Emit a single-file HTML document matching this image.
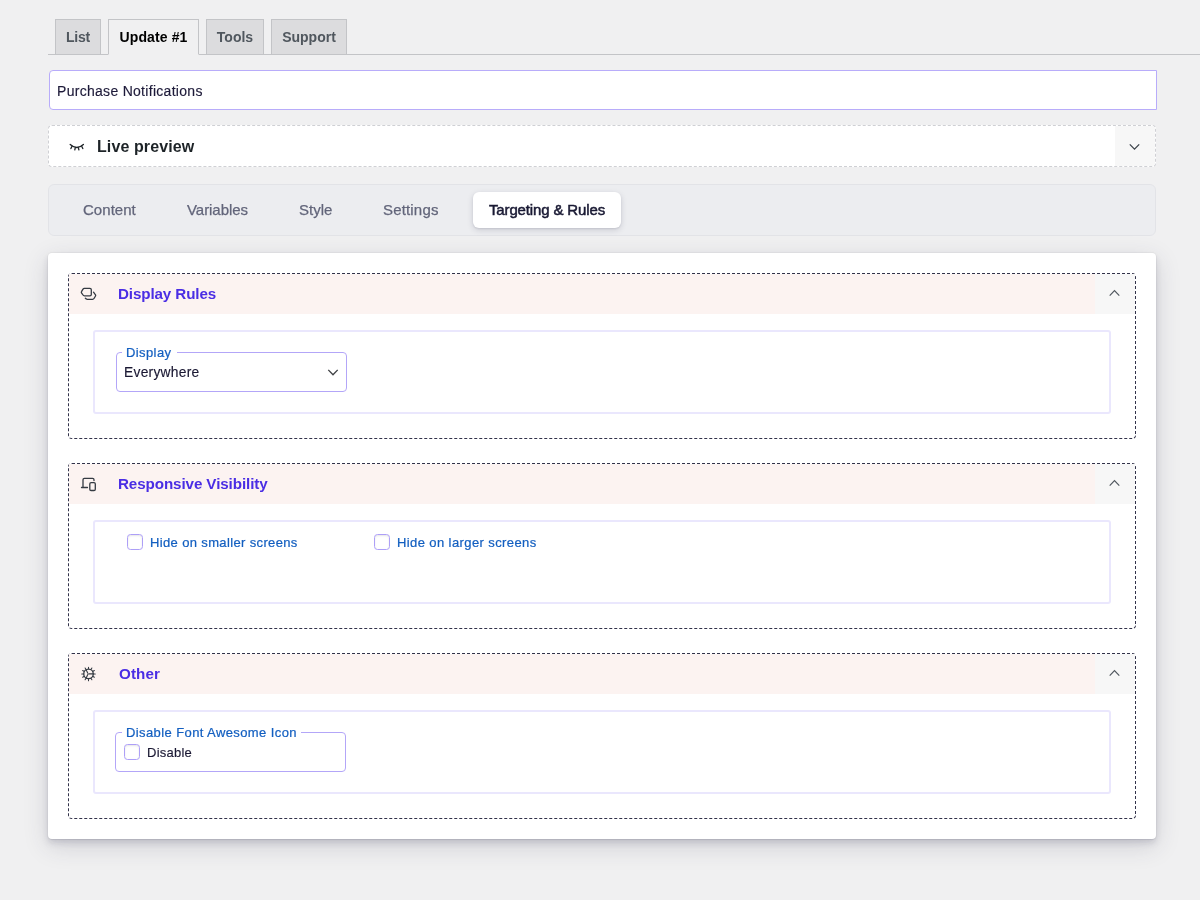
<!DOCTYPE html>
<html><head><meta charset="utf-8">
<style>
*{box-sizing:border-box;margin:0;padding:0}
html,body{width:1200px;height:900px;overflow:hidden;background:#f0f0f1;font-family:"Liberation Sans",sans-serif;color:#1d2327}
.t,.ntab{will-change:transform}
.t{position:absolute;white-space:pre;line-height:20px}
svg{position:absolute;overflow:visible}
.navwrap{position:absolute;left:48px;top:0;width:1152px;height:55px;border-bottom:1px solid #c3c4c7}
.ntab{position:absolute;top:19px;height:36px;border:1px solid #c3c4c7;background:#dcdcde;color:#50575e;font-weight:700;font-size:14px;line-height:34px;text-align:center;white-space:nowrap}
.ntab.act{background:#f0f0f1;color:#000;border-bottom-color:#f0f0f1}
.title{position:absolute;left:49px;top:70px;width:1108px;height:40px;background:#fff;border:1px solid #b8acfa;border-radius:4px 0 0 4px}
.live{position:absolute;left:48px;top:125px;width:1108px;height:42px;background:#fff;border:1px dashed #cfd0d4;border-radius:4px;overflow:hidden}
.live .r{position:absolute;right:0;top:0;width:40px;height:40px;background:#f7f7f7}
.tabs{position:absolute;left:48px;top:184px;width:1108px;height:52px;background:#ecedf0;border:1px solid #e2e3e7;border-radius:6px}
.tabact{position:absolute;left:473px;top:192px;width:148px;height:36px;background:#fff;border-radius:6px;box-shadow:0 2px 6px rgba(30,30,60,.15),0 1px 2px rgba(30,30,60,.1)}
.tt{font-size:15px;color:#62657a;-webkit-text-stroke:.25px #62657a}
.card{position:absolute;left:48px;top:253px;width:1108px;height:586px;background:#fff;border-radius:4px;box-shadow:0 0 0 1px rgba(45,45,75,.04),0 1px 1px rgba(45,45,75,.07),0 4px 6px rgba(45,45,75,.15),0 7px 24px rgba(45,45,75,.17)}
.sec{position:absolute;left:68px;width:1068px;height:166px;border:1px dashed #32324a;border-radius:4px}
.sec .hd{position:absolute;left:0;top:0;right:0;height:40px;background:#fcf3f1}
.sec .hd .r{position:absolute;right:0;top:0;width:40px;height:40px;background:#f7f7f7}
.sec .box{position:absolute;left:24px;top:56px;width:1018px;height:84px;border:2px solid #eae7fd;border-radius:3px}
.st{font-size:15.2px;font-weight:700;color:#4a2de4}
.fs{position:absolute;border:1px solid #b3a6f8;border-radius:4px}
.lg{position:absolute;background:#fff;height:4px}
.lt{font-size:13px;color:#135fc0;-webkit-text-stroke:.22px #135fc0}
.cb{position:absolute;width:16px;height:16px;border:1px solid #ad9ff7;border-radius:3.5px;background:#fff;box-shadow:inset 0 1px 2px rgba(0,0,0,.1)}
</style></head><body>
<div class="navwrap"></div>
<div class="ntab" style="left:55px;width:46px;letter-spacing:-.2px">List</div>
<div class="ntab act" style="left:108px;width:91px;letter-spacing:.12px">Update #1</div>
<div class="ntab" style="left:206px;width:58px">Tools</div>
<div class="ntab" style="left:271px;width:76px">Support</div>

<div class="title"></div>
<span class="t" id="t_title" style="left:57.200px;top:81px;font-size:14px;letter-spacing:.29px;color:#1d1a39;-webkit-text-stroke:.15px #1d1a39">Purchase Notifications</span>

<div class="live"><div class="r"></div></div>
<svg id="i_eye" style="left:0;top:.5px" width="1200" height="900" fill="none" stroke="#1d2327" stroke-width="1.3" stroke-linecap="round" stroke-linejoin="round"><path d="M70.200 143.500Q76.800 149.500 83.400 143.500"/><path d="M71.900 145.400L70.900 147.600"/><path d="M75.300 146.600L74.800 148.900"/><path d="M78.300 146.600L78.900 148.900"/><path d="M81.800 145.400L82.800 147.600"/></svg>
<span class="t" id="t_live" style="left:97.400px;top:137px;font-size:16px;font-weight:700;letter-spacing:.1px;color:#1d2327">Live preview</span>
<svg style="left:1128px;top:141px" width="14" height="12" fill="none" stroke="#3c434a" stroke-width="1.3"><path d="M1.800 3.400L6.500 8.100L11.200 3.400"/></svg>

<div class="tabs"></div>
<div class="tabact"></div>
<span class="t tt" id="t_c" style="left:83px;top:200px;letter-spacing:.04px">Content</span>
<span class="t tt" id="t_v" style="left:187.200px;top:200px;letter-spacing:-.05px">Variables</span>
<span class="t tt" id="t_s" style="left:298.800px;top:200px">Style</span>
<span class="t tt" id="t_se" style="left:382.500px;top:200px;letter-spacing:.17px">Settings</span>
<span class="t tt" id="t_tr" style="left:488.700px;top:200px;letter-spacing:-.14px;color:#191933;-webkit-text-stroke:.5px #191933">Targeting &amp; Rules</span>

<div class="card"></div>

<!-- Section 1 -->
<div class="sec" style="top:273px"><div class="hd"><div class="r"></div></div><div class="box"></div></div>
<svg id="i_disp" style="left:0;top:0" width="1200" height="900" fill="none" stroke="#343a42" stroke-width="1.3" stroke-linecap="round" stroke-linejoin="round">
<path d="M84.300 288.300H89.900Q91.300 288.300 91.300 289.700V294.400Q91.300 295.800 89.900 295.800H84.400Q83.500 295.800 83 295L81.500 292.800Q81.100 292.200 81.500 291.600L83 289.100Q83.500 288.300 84.300 288.300Z"/>
<path d="M93.500 292.200L95.500 294.800Q95.900 295.400 95.500 296L94 298.500Q93.500 299.300 92.600 299.300H87.300Q86 299.300 85.300 298.200"/>
</svg>
<span class="t st" id="t_dr" style="left:118.200px;top:284px;letter-spacing:-.12px">Display Rules</span>
<svg style="left:1108px;top:287px" width="14" height="12" fill="none" stroke="#50575e" stroke-width="1.2"><path d="M1.700 8.600L6.500 3.700L11.300 8.600"/></svg>
<div class="fs" style="left:116px;top:352px;width:231px;height:40px"></div>
<div class="lg" style="left:122px;top:351px;width:55px"></div>
<span class="t lt" id="t_dl" style="left:126.400px;top:343px;letter-spacing:.4px">Display</span>
<span class="t" id="t_ev" style="left:124.400px;top:363px;font-size:13.8px;letter-spacing:.27px;color:#1a1833;-webkit-text-stroke:.15px #1a1833">Everywhere</span>
<svg style="left:326px;top:366px" width="14" height="12" fill="none" stroke="#3f4144" stroke-width="1.35"><path d="M2.300 3.900L7 8.800L11.700 3.900"/></svg>

<!-- Section 2 -->
<div class="sec" style="top:463px"><div class="hd"><div class="r"></div></div><div class="box"></div></div>
<svg id="i_dev" style="left:0;top:0" width="1200" height="900" fill="none" stroke="#343a42" stroke-width="1.3" stroke-linecap="round" stroke-linejoin="round">
<path d="M94 480.500V479.700Q94 478.300 92.600 478.300H84.400Q83 478.300 83 479.700V487.500M81.500 487.500H87.500"/>
<rect x="89.800" y="482.700" width="5.500" height="7.800" rx="1.300"/>
</svg>
<span class="t st" id="t_rv" style="left:118.200px;top:474px;letter-spacing:-.1px">Responsive Visibility</span>
<svg style="left:1108px;top:477px" width="14" height="12" fill="none" stroke="#50575e" stroke-width="1.2"><path d="M1.700 8.600L6.500 3.700L11.300 8.600"/></svg>
<div class="cb" style="left:127px;top:534px"></div>
<span class="t lt" id="t_h1" style="left:150px;top:533px;letter-spacing:.36px">Hide on smaller screens</span>
<div class="cb" style="left:374px;top:534px"></div>
<span class="t lt" id="t_h2" style="left:397px;top:533px;letter-spacing:.4px">Hide on larger screens</span>

<!-- Section 3 -->
<div class="sec" style="top:653px"><div class="hd"><div class="r"></div></div><div class="box"></div></div>
<svg id="i_cog" style="left:0;top:-.2px" width="1200" height="900" fill="none" stroke="#343a42" stroke-linecap="round" stroke-linejoin="round"><circle cx="88.5" cy="673.9" r="4.75" stroke-width="1.35"/><path d="M88.50 668.60L88.50 667.15M91.15 669.31L91.88 668.05M93.09 671.25L94.35 670.52M93.80 673.90L95.25 673.90M93.09 676.55L94.35 677.27M91.15 678.49L91.88 679.75M88.50 679.20L88.50 680.65M85.85 678.49L85.12 679.75M83.91 676.55L82.65 677.27M83.20 673.90L81.75 673.90M83.91 671.25L82.65 670.52M85.85 669.31L85.12 668.05" stroke-width="1.05"/><path d="M88.90 673.90H93.20M87.80 673.20L86.15 669.83M87.80 674.60L86.15 677.97" stroke-width="1.1"/></svg>
<span class="t st" id="t_ot" style="left:119px;top:664px;letter-spacing:.12px">Other</span>
<svg style="left:1108px;top:667px" width="14" height="12" fill="none" stroke="#50575e" stroke-width="1.2"><path d="M1.700 8.600L6.500 3.700L11.300 8.600"/></svg>
<div class="fs" style="left:115px;top:732px;width:231px;height:40px"></div>
<div class="lg" style="left:121.500px;top:731px;width:179.500px"></div>
<span class="t lt" id="t_fl" style="left:126px;top:723px;letter-spacing:.4px">Disable Font Awesome Icon</span>
<div class="cb" style="left:124px;top:744px"></div>
<span class="t" id="t_di" style="left:146.900px;top:743px;font-size:13px;letter-spacing:.25px;color:#1a1833;-webkit-text-stroke:.15px #1a1833">Disable</span>
</body></html>
